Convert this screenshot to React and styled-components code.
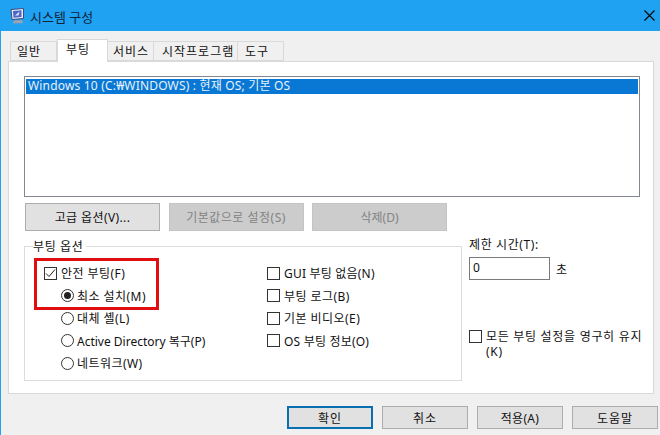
import React from "react";
import styled, { createGlobalStyle } from "styled-components";

const Global = createGlobalStyle`
  html, body { margin: 0; padding: 0; background: #f0f0f0; }
  body { font-family: "Noto Sans", "Noto Sans CJK KR", sans-serif; font-size: 12px; color: #111; }
  * { box-sizing: border-box; }
`;

const Win = styled.div`
  width: 660px; height: 435px; overflow: hidden; background: #f0f0f0;
  border-left: 1px solid #1ea1f1; display: flex; flex-direction: column;
`;
const TitleBar = styled.div`
  height: 31px; flex: none; background: #20a2f2; display: flex; align-items: center;
  padding: 0 5px 0 9px; gap: 5px;
`;
const TitleText = styled.div`font-size: 13px; color: #10243a; flex: 1; padding-top: 1px;`;
const Content = styled.div`flex: 1; display: flex; flex-direction: column; padding: 8px 5px 0 7px;`;
const TabRow = styled.div`height: 22px; flex: none; display: flex; align-items: flex-end; padding-left: 2px; position: relative; z-index: 1;`;
const Tab = styled.div`
  height: ${p => p.$active ? "23px" : "20px"};
  width: ${p => p.$w}px; margin-bottom: ${p => p.$active ? "-1px" : "0"};
  background: ${p => p.$active ? "#fff" : "#f0f0f0"};
  border: 1px solid #d9d9d9; border-bottom: ${p => p.$active ? "none" : "1px solid #d9d9d9"};
  border-left: ${p => p.$first || p.$active ? "1px solid #d9d9d9" : "none"};
  display: flex; align-items: center; white-space: nowrap; letter-spacing: 1px;
  padding-left: ${p => p.$pad}px;
  padding-bottom: ${p => p.$active ? "4px" : "0"};
`;
const Panel = styled.div`
  width: 646px; height: 333px; background: #fff; border: 1px solid #d9d9d9;
  padding: 14px 13px 0 15px; display: flex; flex-direction: column;
`;
const ListBox = styled.div`
  height: 121px; width: 616px; flex: none; border: 1px solid #828790; background: #fff; padding: 2px 1px;
`;
const ListItem = styled.div`
  height: 15px; line-height: 14px; background: #0878d4; color: #e8f2fb; padding-left: 2px;
  white-space: nowrap; letter-spacing: .18px;
`;
const ActionRow = styled.div`display: flex; gap: 8.5px; margin: 6px 0 0 1px;`;
const Btn = styled.div`
  height: ${p => p.$h || 28}px; width: ${p => p.$w}px; flex: none; display: flex; align-items: center; justify-content: center;
  background: ${p => p.$off ? "#cccccc" : "#e1e1e1"};
  color: ${p => p.$off ? "#838383" : "#111"};
  letter-spacing: ${p => p.$ls || 0}px;
  border: ${p => p.$def ? "2px solid #0a6fb0" : p.$off ? "1px solid #c4c4c4" : "1px solid #adadad"};
`;
const OptionsArea = styled.div`display: grid; grid-template-columns: 438px 1fr; column-gap: 7px; margin-top: 15px;`;
const Group = styled.div`
  position: relative; height: 135px; border: 1px solid #dcdcdc;
  display: grid; grid-template-columns: 223px 1fr; padding: 15px 0 0 19px;
`;
const Legend = styled.div`
  position: absolute; left: 8px; top: -8px; background: #fff; padding: 0 3px 0 0; line-height: 15px; letter-spacing: .6px;
`;
const Col = styled.div`display: flex; flex-direction: column;`;
const Row = styled.div`
  height: 22.5px; display: flex; align-items: center; gap: 4px; white-space: nowrap;
  padding-left: ${p => p.$indent ? "17px" : "0"};
  letter-spacing: ${p => p.$ls ?? .45}px;
`;
const Box = styled.span`
  width: 13px; height: 13px; flex: none; border: 1px solid #333; background: #fff; display: flex;
  align-items: center; justify-content: center;
`;
const Radio = styled.span`
  width: 13px; height: 13px; flex: none; margin-right: -1px; border: 1px solid #333; border-radius: 50%; background: #fff;
  display: flex; align-items: center; justify-content: center;
  &::after { content: ""; width: 7px; height: 7px; border-radius: 50%; background: ${p => p.$on ? "#222" : "transparent"}; }
`;
const Highlight = styled.div`
  position: absolute; left: 9px; top: 11px; width: 125px; height: 52px; border: 3px solid #e20d0d; pointer-events: none;
`;
const Side = styled.div`display: flex; flex-direction: column; margin-top: -9px;`;
const Label = styled.div`line-height: 16px; letter-spacing: .6px;`;
const InputRow = styled.div`display: flex; align-items: center; gap: 6px; margin-top: 4px;`;
const Input = styled.div`
  width: 81px; height: 23px; border: 1px solid #7a7a7a; background: #fff; padding-left: 3px; line-height: 19px;
`;
const Persist = styled.div`display: flex; gap: 4px; margin-top: 50px; width: 177px;`;
const PersistText = styled.div`line-height: 15px; margin-top: -1px; letter-spacing: .7px;`;
const Footer = styled.div`display: flex; gap: 9px; margin: 12px 0 0 279px;`;

const Check = () => (
  <svg width="11" height="11" viewBox="0 0 11 11"><path d="M1 5.5 L4 8.5 L10 1.5" fill="none" stroke="#222" strokeWidth="1" /></svg>
);
const AppIcon = () => (
  <svg width="15" height="16" viewBox="0 0 15 16">
    <path d="M1 1.5 L13.5 .5 L13.5 10.5 L2 11.5 Z" fill="#e6ebf5" stroke="#3c4a78" />
    <path d="M3 3 L11.5 2.3 L11.5 9 L3.5 9.7 Z" fill="#4b67c8" />
    <path d="M5 7.5 L9.5 3.5 L8.5 7.5 Z" fill="#dfe8fa" />
    <path d="M4 12.5 L12 12 L13 15 L3 15.5 Z" fill="#9ea3ad" />
  </svg>
);
const Close = () => (
  <svg width="11" height="11" viewBox="0 0 11 11"><path d="M.5 .5 L10.5 10.5 M10.5 .5 L.5 10.5" stroke="#000" strokeWidth="1.1" /></svg>
);

export default function App() {
  return (
    <Win>
      <Global />
      <TitleBar>
        <AppIcon />
        <TitleText>시스템 구성</TitleText>
        <Close />
      </TitleBar>
      <Content>
        <TabRow>
          <Tab $first $w={47} $pad={6}>일반</Tab>
          <Tab $active $w={51} $pad={8}>부팅</Tab>
          <Tab $w={46} $pad={5}>서비스</Tab>
          <Tab $w={84} $pad={8}>시작프로그램</Tab>
          <Tab $w={46} $pad={7}>도구</Tab>
        </TabRow>
        <Panel>
          <ListBox><ListItem>Windows 10 (C:₩WINDOWS) : 현재 OS; 기본 OS</ListItem></ListBox>
          <ActionRow>
            <Btn $w={135} $ls={.4}>고급 옵션(V)...</Btn>
            <Btn $w={135} $off $ls={.5}>기본값으로 설정(S)</Btn>
            <Btn $w={135} $off>삭제(D)</Btn>
          </ActionRow>
          <OptionsArea>
            <Group>
              <Legend>부팅 옵션</Legend>
              <Highlight />
              <Col>
                <Row><Box><Check /></Box>안전 부팅(F)</Row>
                <Row $indent><Radio $on />최소 설치(M)</Row>
                <Row $indent><Radio />대체 셸(L)</Row>
                <Row $indent $ls={0}><Radio />Active Directory 복구(P)</Row>
                <Row $indent><Radio />네트워크(W)</Row>
              </Col>
              <Col>
                <Row $ls={.2}><Box />GUI 부팅 없음(N)</Row>
                <Row><Box />부팅 로그(B)</Row>
                <Row><Box />기본 비디오(E)</Row>
                <Row $ls={.2}><Box />OS 부팅 정보(O)</Row>
              </Col>
            </Group>
            <Side>
              <Label>제한 시간(T):</Label>
              <InputRow><Input>0</Input>초</InputRow>
              <Persist><Box /><PersistText>모든 부팅 설정을 영구히 유지 (K)</PersistText></Persist>
            </Side>
          </OptionsArea>
        </Panel>
        <Footer>
          <Btn $w={86} $h={23} $def $ls={1}>확인</Btn>
          <Btn $w={86} $h={23} $ls={1}>취소</Btn>
          <Btn $w={86} $h={23} $ls={.3}>적용(A)</Btn>
          <Btn $w={86} $h={23} $ls={1}>도움말</Btn>
        </Footer>
      </Content>
    </Win>
  );
}
